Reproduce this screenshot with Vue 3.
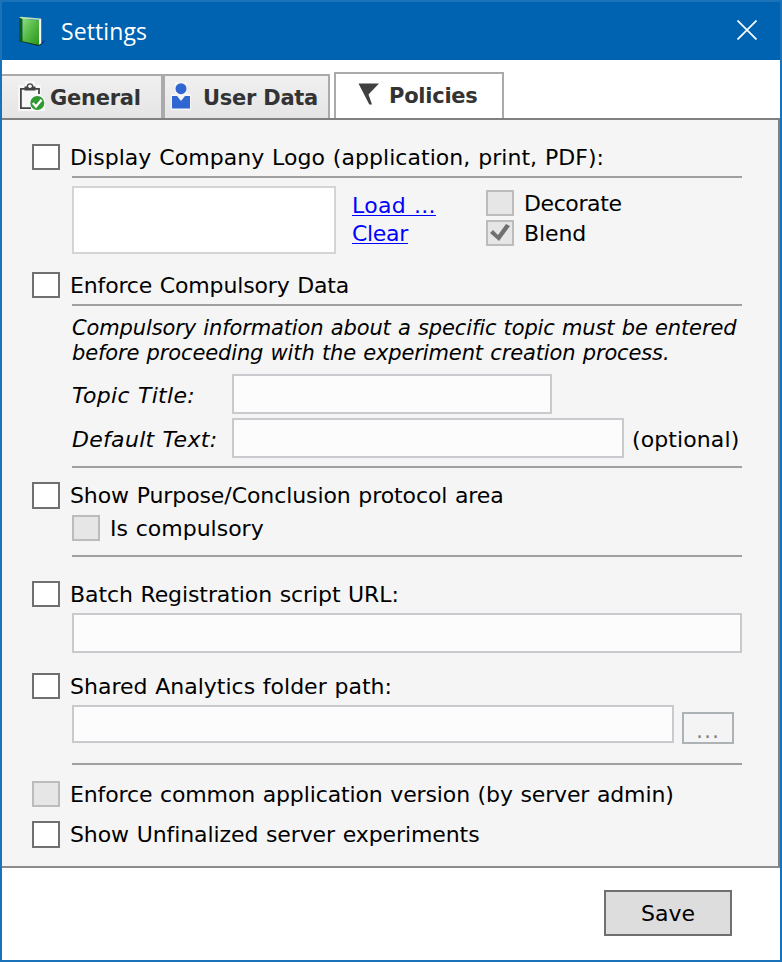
<script setup>
import { ref } from 'vue'

const logo = ref(false)
const decorate = ref(false)
const blend = ref(true)
const enforceData = ref(false)
const purpose = ref(false)
const compulsory = ref(false)
const batch = ref(false)
const analytics = ref(false)
const commonVersion = ref(false)
const unfinalized = ref(false)
</script>

<template>
  <div class="window">
    <header class="titlebar">
      <svg class="book" width="28" height="30" viewBox="0 0 28 30">
        <defs>
          <linearGradient id="cover" x1="0" y1="0" x2="1" y2="1">
            <stop offset="0" stop-color="#8fdc80" />
            <stop offset="0.5" stop-color="#52b843" />
            <stop offset="1" stop-color="#2a961c" />
          </linearGradient>
        </defs>
        <path d="M22 28 L27 23.500 L25.500 27 L22.500 29 Z" fill="#063c70" />
        <path d="M1 25 L20.500 30 L23.500 28 L22 24 L4 22 Z" fill="#07280d" />
        <path d="M1 1.500 L4.500 2.500 L4.500 26 L1 25.500 Z" fill="#0f5f12" />
        <path d="M1 1.500 L3 0.700 L23 2.500 L23 4 L4.500 3 Z" fill="#b9dfb2" />
        <path d="M20.500 4.500 L23.200 2.800 L23.200 27.500 L20.500 29 Z" fill="#f4f7f2" />
        <path d="M4.500 2.500 L21 4.500 L21 29 L4.500 25.300 Z" fill="url(#cover)" />
      </svg>
      <h1>Settings</h1>
      <svg class="close" width="20" height="20" viewBox="0 0 20 20">
        <path d="M0.5 0.5 L19.5 19.5 M19.5 0.5 L0.5 19.5" stroke="#fff" stroke-width="1.7" fill="none" />
      </svg>
    </header>

    <nav class="tabs">
      <div class="tab general">
        <svg width="27" height="30" viewBox="0 0 27 30">
          <path d="M0 4 H7 V0 H17 V4 H23 V14 L27 18 V30 H0 Z" fill="#f7f7f7" />
          <path d="M13 27.200 H2.900 V7.800 H21 V13" fill="none" stroke="#444" stroke-width="1.8" />
          <path d="M6.500 9.500 V5.500 H8.500 A3.600 4.200 0 0 1 15.500 5.500 H17.500 V9.500 Z" fill="#444" />
          <circle cx="12" cy="5.200" r="1.800" fill="#fafafa" />
          <circle cx="19.300" cy="22" r="7" fill="#2f9a32" />
          <path d="M14.800 22 L18 25.500 L23.600 18.800" fill="none" stroke="#fff" stroke-width="2.300" />
        </svg>
        <span>General</span>
      </div>
      <div class="tab user">
        <svg width="20" height="28" viewBox="0 0 20 28">
          <path d="M4 0 H16 V12 H20 V28 H0 V12 H4 Z" fill="#f6f6f6" />
          <circle cx="10" cy="6.700" r="5.500" fill="#2f66d2" />
          <path d="M1 14 H6 L10 19 L14 14 H19 V26.500 H1 Z" fill="#2f66d2" />
        </svg>
        <span>User Data</span>
      </div>
      <div class="tab active">
        <svg width="22" height="22" viewBox="0 0 22 22">
          <path d="M0.500 0.500 H21 L10.500 11.500 L14 21.500 H11.300 Z" fill="#404040" />
        </svg>
        <span>Policies</span>
      </div>
    </nav>

    <main class="panel">
      <label class="row"><input v-model="logo" type="checkbox" class="box"><span class="t-logo">Display Company Logo (application, print, PDF):</span></label>
      <section class="logo-area">
        <div class="preview"></div>
        <div class="links"><a class="t-load">Load ...</a><a class="t-clear">Clear</a></div>
        <div class="options">
          <label class="row"><input v-model="decorate" type="checkbox" class="box" disabled><span class="t-dec">Decorate</span></label>
          <label class="row"><input v-model="blend" type="checkbox" class="box" disabled><span class="t-blend">Blend</span></label>
        </div>
      </section>

      <label class="row"><input v-model="enforceData" type="checkbox" class="box"><span class="t-enf">Enforce Compulsory Data</span></label>
      <section class="data-area">
        <p>Compulsory information about a specific topic must be entered<br>before proceeding with the experiment creation process.</p>
        <div class="field"><em>Topic Title:</em><input type="text" class="input topic" disabled></div>
        <div class="field"><em>Default Text:</em><input type="text" class="input default" disabled><span class="opt">(optional)</span></div>
      </section>

      <label class="row tall"><input v-model="purpose" type="checkbox" class="box"><span class="t-tight">Show Purpose/Conclusion protocol area</span></label>
      <label class="row sub"><input v-model="compulsory" type="checkbox" class="box" disabled><span>Is compulsory</span></label>

      <label class="row batch"><input v-model="batch" type="checkbox" class="box"><span class="t-tight">Batch Registration script URL:</span></label>
      <input type="text" class="input url" disabled>

      <label class="row shared"><input v-model="analytics" type="checkbox" class="box"><span>Shared Analytics folder path:</span></label>
      <div class="path-row">
        <input type="text" class="input path" disabled>
        <button class="browse" disabled>...</button>
      </div>

      <label class="row common"><input v-model="commonVersion" type="checkbox" class="box" disabled><span class="t-common">Enforce common application version (by server admin)</span></label>
      <label class="row tall"><input v-model="unfinalized" type="checkbox" class="box"><span class="t-tight">Show Unfinalized server experiments</span></label>
    </main>

    <footer class="footer"><button class="save">Save</button></footer>
  </div>
</template>

<style>
body { margin: 0; }
</style>

<style scoped>
* { box-sizing: border-box; }
.window {
  width: 782px;
  height: 962px;
  display: flex;
  flex-direction: column;
  border: 2px solid #1a72b8;
  background: #fff;
  color: #000;
  font: 22px/26px "DejaVu Sans", Verdana, sans-serif;
  font-variant-ligatures: none;
  white-space: nowrap;
}
.titlebar {
  height: 58px;
  display: flex;
  align-items: center;
  padding: 0 23px 0 16px;
  background: #0063b1;
}
.book { margin-top: -1px; }
.titlebar h1 {
  flex: 1;
  margin: -1px 0 0 15px;
  color: #fff;
  font: 400 23px/30px "Open Sans", "Noto Sans", sans-serif;
  letter-spacing: 0.1px;
}
.close { margin-top: -2px; }
.tabs {
  height: 60px;
  display: flex;
  align-items: flex-end;
  border-bottom: 2px solid #808080;
}
.tab {
  height: 44px;
  display: flex;
  align-items: center;
  border: 2px solid #aaa;
  border-bottom: 0;
  background: linear-gradient(#f0f0f0, #e5e5e5);
  color: #333;
  font-size: 21px;
  font-weight: 700;
  letter-spacing: -0.25px;
}
.general { width: 161px; border-left: 0; padding-left: 16px; gap: 5px; }
.general svg { margin-top: -2px; }
.general span, .user span { margin-top: 2px; }
.user { width: 167px; padding-left: 6px; gap: 12px; }
.user svg { margin-top: -2px; }
.active { width: 170px; height: 46px; margin-left: 4px; padding-left: 22px; gap: 9px; background: #fff; }
.active svg { margin-top: -4px; }
.panel {
  height: 748px;
  padding: 24px 0 0 30px;
  border-right: 2px solid #808080;
  border-bottom: 2px solid #8c8c8c;
  background: #f5f5f5;
  word-spacing: 0.75px;
}
.row { display: flex; height: 26px; gap: 10px; }
.row span { padding-top: 1px; }
.row.tall { height: 27px; }
.box {
  appearance: none;
  width: 28px;
  height: 100%;
  margin: 0;
  border: 2px solid #707070;
  background: #fff;
}
.box:disabled { border-color: #bcbcbc; background: #e6e6e6; }
.box:checked::before {
  content: "";
  display: block;
  width: 20px;
  height: 18px;
  margin: 2px;
  background: #707070;
  clip-path: polygon(0 9px, 3px 6px, 8px 11px, 16px 0, 20px 2px, 9px 17px);
}
.t-logo { letter-spacing: 0.05px; }
.t-load { letter-spacing: 0.3px; }
.t-clear { letter-spacing: -0.3px; }
.t-dec { letter-spacing: -0.4px; }
.t-blend { letter-spacing: -0.1px; }
.t-enf { letter-spacing: -0.15px; }
.t-tight { letter-spacing: -0.09px; }
.t-common { letter-spacing: -0.125px; }
.logo-area {
  display: flex;
  width: 670px;
  height: 96px;
  margin: 6px 0 0 40px;
  padding-top: 8px;
  border-top: 2px solid #a0a0a0;
}
.preview { width: 264px; height: 68px; border: 2px solid #d4d4d4; background: #fff; }
.links { display: flex; flex-direction: column; width: 150px; padding: 7px 0 0 16px; }
.links a {
  align-self: flex-start;
  height: 28px;
  color: #00f;
  text-decoration: underline;
  text-decoration-thickness: 1px;
  text-underline-offset: 2px;
}
.options { display: flex; flex-direction: column; gap: 4px; padding-top: 4px; }
.data-area {
  width: 670px;
  height: 164px;
  margin: 6px 0 14px 40px;
  padding-top: 10px;
  border-top: 2px solid #a0a0a0;
  border-bottom: 2px solid #a0a0a0;
}
.data-area p { margin: 0 0 8px; font-size: 21px; font-style: italic; line-height: 25px; letter-spacing: -0.13px; }
.field { display: flex; align-items: center; height: 40px; margin-bottom: 4px; }
.field em { width: 160px; padding-top: 3px; letter-spacing: 0.3px; }
.opt { padding: 3px 0 0 8px; letter-spacing: 0.1px; }
.input { display: block; height: 40px; padding: 0; border: 2px solid #c9c9ce; background: #fcfcfc; }
.topic { width: 320px; }
.default { width: 392px; }
.sub { width: 670px; height: 42px; margin: 6px 0 24px 40px; padding-bottom: 14px; border-bottom: 2px solid #a0a0a0; }
.batch { margin-bottom: 6px; }
.url { width: 670px; margin-left: 40px; }
.shared { margin: 20px 0 6px; }
.path-row {
  display: flex;
  gap: 8px;
  width: 670px;
  height: 60px;
  margin: 0 0 16px 40px;
  border-bottom: 2px solid #a0a0a0;
}
.path { width: 602px; height: 38px; }
.browse {
  width: 52px;
  height: 32px;
  margin-top: 7px;
  padding: 5px 0 0;
  border: 2px solid #adb2b5;
  background: #f4f4f4;
  color: #838383;
  font: 22px/20px "DejaVu Sans", sans-serif;
  letter-spacing: 1px;
}
.common { margin-bottom: 14px; }
.footer { display: flex; justify-content: flex-end; padding: 22px 48px 0 0; }
.save {
  width: 128px;
  height: 46px;
  padding: 2px 0 0;
  border: 2px solid #707070;
  background: #ddd;
  color: #000;
  font: 22px/26px "DejaVu Sans", sans-serif;
}
</style>
